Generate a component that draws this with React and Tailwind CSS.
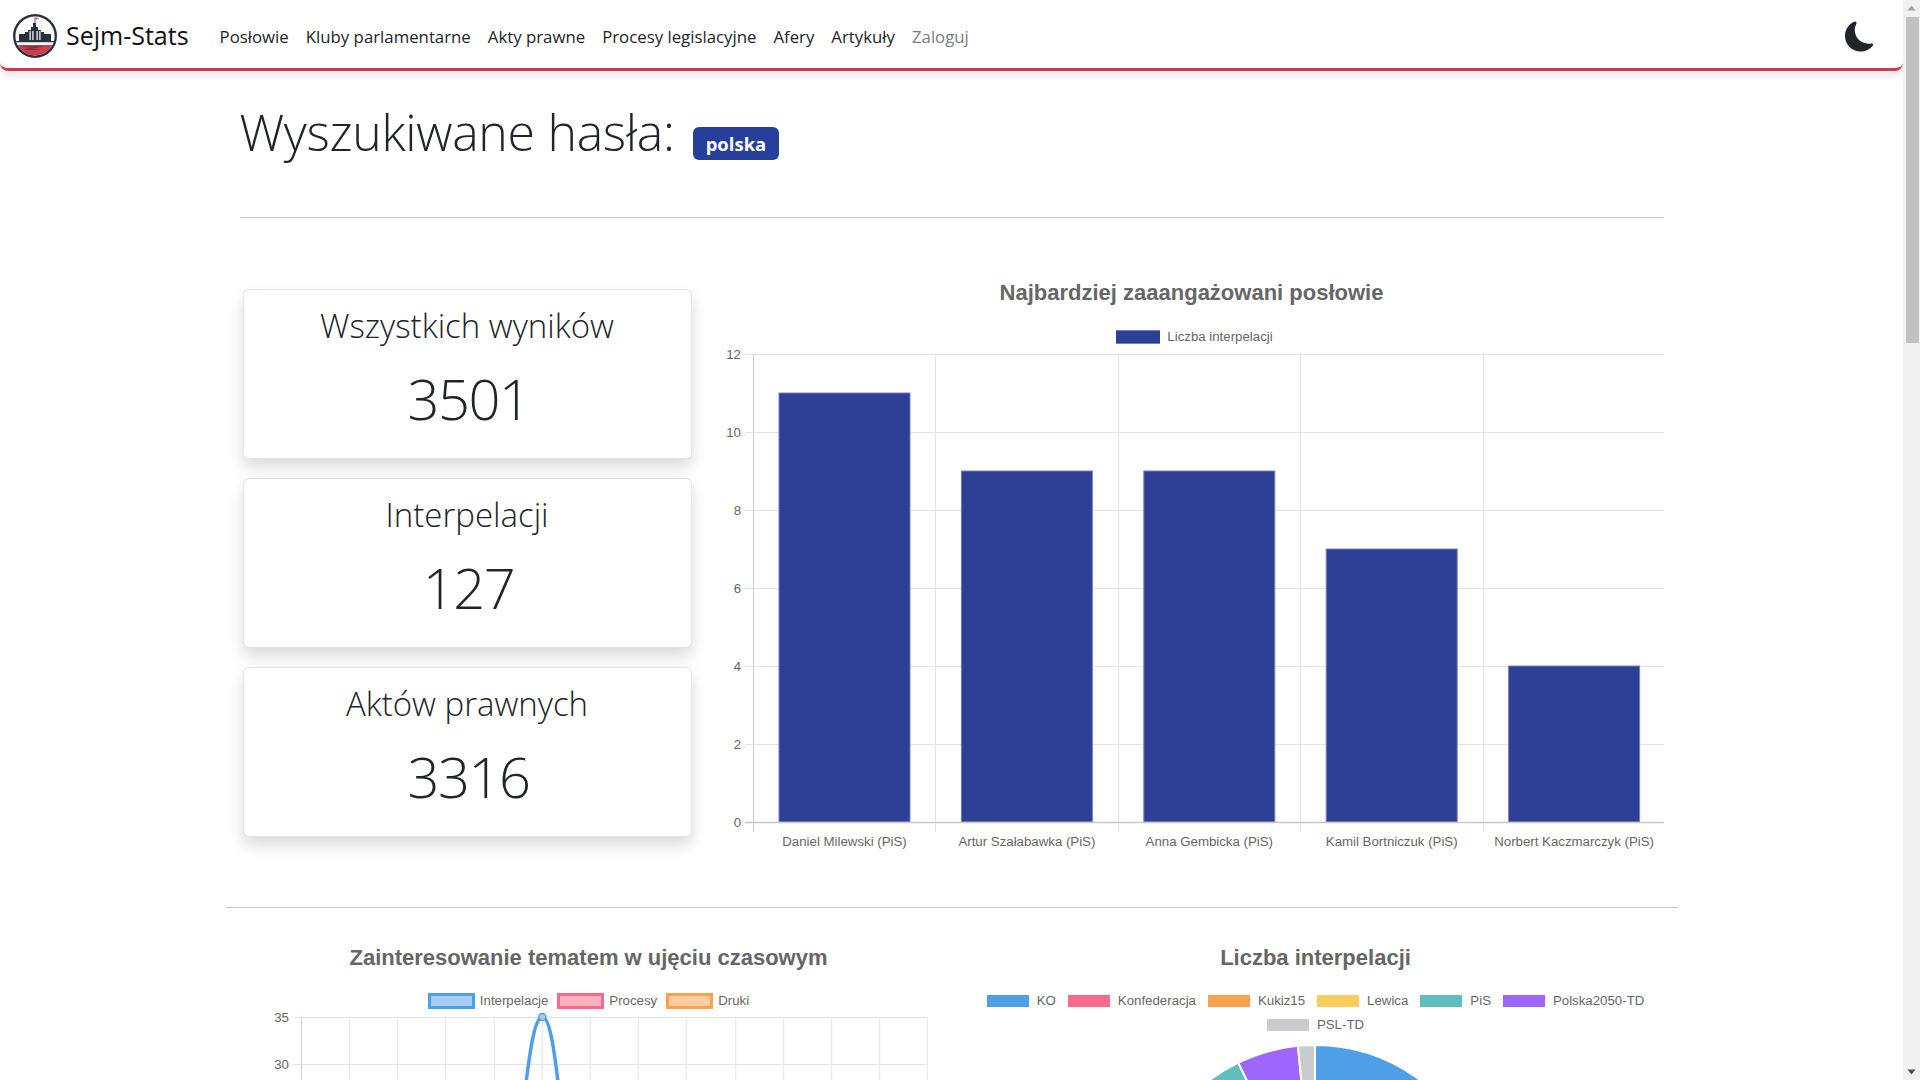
import React from "react";

const NAV_LINKS = ["Posłowie", "Kluby parlamentarne", "Akty prawne", "Procesy legislacyjne", "Afery", "Artykuły"];

const STATS = [
  { label: "Wszystkich wyników", value: "3501" },
  { label: "Interpelacji", value: "127" },
  { label: "Aktów prawnych", value: "3316" },
];

const BARS = [
  { name: "Daniel Milewski (PiS)", value: 11 },
  { name: "Artur Szałabawka (PiS)", value: 9 },
  { name: "Anna Gembicka (PiS)", value: 9 },
  { name: "Kamil Bortniczuk (PiS)", value: 7 },
  { name: "Norbert Kaczmarczyk (PiS)", value: 4 },
];

const LINE_LEGEND = [
  { label: "Interpelacje", border: "border-[#4e9fe9]", fill: "bg-[#a8cdf2]" },
  { label: "Procesy", border: "border-[#f96a8a]", fill: "bg-[#fcb1c2]" },
  { label: "Druki", border: "border-[#fba14b]", fill: "bg-[#fdcfa0]" },
];

const PIE_LEGEND = [
  { label: "KO", fill: "bg-[#4f9fe8]" },
  { label: "Konfederacja", fill: "bg-[#f96b8b]" },
  { label: "Kukiz15", fill: "bg-[#f9a24b]" },
  { label: "Lewica", fill: "bg-[#fbce5c]" },
  { label: "PiS", fill: "bg-[#5fbfbf]" },
  { label: "Polska2050-TD", fill: "bg-[#9c66ff]" },
];

const PIE = [
  { color: "#4f9fe8", from: 0, to: 140 },
  { color: "#f96b8b", from: 140, to: 175 },
  { color: "#f9a24b", from: 175, to: 190 },
  { color: "#fbce5c", from: 190, to: 262 },
  { color: "#5fbfbf", from: 262, to: 334 },
  { color: "#9c66ff", from: 334, to: 354.4 },
  { color: "#c9cbcf", from: 354.4, to: 360 },
];

const CHART_FONT = "'Liberation Sans', Arial, sans-serif";

const slicePath = (cx, cy, r, from, to) => {
  const point = (deg) => {
    const rad = (deg * Math.PI) / 180;
    return `${cx + r * Math.sin(rad)} ${cy - r * Math.cos(rad)}`;
  };
  return `M${cx} ${cy} L${point(from)} A${r} ${r} 0 ${to - from > 180 ? 1 : 0} 1 ${point(to)} Z`;
};

const Logo = () => (
  <svg viewBox="0 0 44 44" className="h-[44px] w-[44px] shrink-0">
    <defs>
      <clipPath id="logo-inner">
        <circle cx="22" cy="22" r="19.6" />
      </clipPath>
    </defs>
    <circle cx="22" cy="22" r="22" fill="#27323d" />
    <g clipPath="url(#logo-inner)">
      <rect width="44" height="44" fill="#ffffff" />
      <path d="M6 20h6v-2h3v-2h3v-3h2V9h1.6V4h.8v5H23v4h2v3h3v2h3v2h7v7H6z" fill="#27323d" />
      <path d="M22.4 3.2l3.2 1.3-3.2 1.2z" fill="#d13b47" />
      <path d="M16.5 17h1.2v9h-1.2zM19.3 17h1.2v9h-1.2zM23.5 17h1.2v9h-1.2zM26.3 17h1.2v9h-1.2z" fill="#ffffff" />
      <rect x="0" y="27" width="44" height="1.5" fill="#27323d" />
      <rect x="0" y="28.5" width="44" height="2.5" fill="#ffffff" />
      <rect x="0" y="31" width="44" height="13" fill="#d13b47" />
      <path d="M8 32.5c6-.6 14-.6 24 0-5 .8-9 1.4-13 2.4 3 0 6 .3 9 1-5 .3-11 .3-18-.5 4-.8 6-1.3 8-1.6-3-.4-6-.6-10-1.3z" fill="#27323d" opacity="0.5" />
    </g>
  </svg>
);

const Navbar = () => (
  <nav className="flex h-[71px] items-center rounded-b-lg border-b-[3px] border-[#cf3a47] bg-white pl-[13px] pr-[28px] pt-[3px] shadow-[0_4px_8px_rgba(0,0,0,0.1)]">
    <Logo />
    <span className="ml-[9px] mt-[1px] text-[25px] text-[#111]">Sejm-Stats</span>
    <ul className="ml-[31px] mt-[2px] flex items-center gap-[17px] text-[16.8px] text-[#212529]">
      {NAV_LINKS.map((link) => (
        <li key={link}>{link}</li>
      ))}
      <li className="text-[#7a7d80]">Zaloguj</li>
    </ul>
    <svg viewBox="0 0 16 16" className="ml-auto mt-[1px] h-[31px] w-[30px] text-[#212529]" fill="currentColor">
      <path d="M6 .278a.77.77 0 0 1 .08.858 7.2 7.2 0 0 0-.878 3.46c0 4.021 3.278 7.277 7.318 7.277q.792-.001 1.533-.16a.79.79 0 0 1 .81.316.73.73 0 0 1-.031.893A8.35 8.35 0 0 1 8.344 16C3.734 16 0 12.286 0 7.71 0 4.266 2.114 1.312 5.124.06A.75.75 0 0 1 6 .278" />
    </svg>
  </nav>
);

const StatCard = ({ label, value }) => (
  <div className="flex h-[170px] w-[449px] flex-col items-center rounded-md border border-black/10 bg-white pt-[12px] shadow-[0_8px_16px_rgba(0,0,0,0.15)]">
    <div className="text-[33px] font-light leading-[48px] text-[#212529]">{label}</div>
    <div className="ml-[3px] mt-[8px] text-[56px] font-light leading-[80px] tracking-[-1.5px] text-[#212529]">{value}</div>
  </div>
);

const BarChart = () => {
  const plotLeft = 33;
  const top = 8;
  const unit = 39;
  const step = 182.4;
  const bottom = top + unit * 12;
  return (
    <svg width="944" height="509" className="block" style={{ fontFamily: CHART_FONT }}>
      {[12, 10, 8, 6, 4, 2].map((tick) => {
        const y = top + (12 - tick) * unit + 0.5;
        return (
          <g key={tick}>
            <line x1={plotLeft - 8} x2="944" y1={y} y2={y} stroke="#e4e4e4" />
            <text x={plotLeft - 12} y={y + 4.5} textAnchor="end" fontSize="13.25" fill="#666">{tick}</text>
          </g>
        );
      })}
      <text x={plotLeft - 12} y={bottom + 5} textAnchor="end" fontSize="13.25" fill="#666">0</text>
      {[0, 1, 2, 3, 4, 5].map((i) => {
        const x = Math.round(plotLeft + i * step) + 0.5;
        return <line key={i} x1={x} x2={x} y1={top} y2={bottom + 10} stroke={i === 0 ? "#cfcfcf" : "#e4e4e4"} />;
      })}
      {BARS.map((bar, i) => {
        const x = plotLeft + 26 + i * step;
        const y = top + (12 - bar.value) * unit;
        return (
          <g key={bar.name}>
            <rect x={x} y={y} width="131" height={bar.value * unit} fill="#2e3f96" stroke="#7480bd" strokeWidth="1" />
            <text x={x + 65.5} y={bottom + 24} textAnchor="middle" fontSize="13.25" fill="#666">{bar.name}</text>
          </g>
        );
      })}
      <line x1={plotLeft - 8} x2="944" y1={bottom + 0.5} y2={bottom + 0.5} stroke="#c8c8c8" strokeWidth="1.5" />
    </svg>
  );
};

const LineChart = () => {
  const xs = [51.4, 99.4, 147.4, 195.4, 244.4, 292.3, 340.3, 388.3, 436.3, 485.8, 533.7, 581.7, 629.7, 677.7];
  return (
    <svg width="678" height="80" className="block" style={{ fontFamily: CHART_FONT }}>
      {xs.map((x, i) => (
        <line key={x} x1={x} x2={x} y1="8" y2="80" stroke={i === 0 ? "#cfcfcf" : "#e4e4e4"} />
      ))}
      {[
        { label: "35", y: 8.5 },
        { label: "30", y: 55.5 },
      ].map((tick) => (
        <g key={tick.label}>
          <line x1="43" x2="678" y1={tick.y} y2={tick.y} stroke="#e4e4e4" />
          <text x="39" y={tick.y + 4.5} textAnchor="end" fontSize="13.25" fill="#666">{tick.label}</text>
        </g>
      ))}
      <path d="M270 120 C277 70 282 8 292.3 8 C302.6 8 307 70 314 120" fill="none" stroke="#4e9fe9" strokeWidth="3.5" />
      <circle cx="292.3" cy="8" r="3.5" fill="#a8cdf2" stroke="#4e9fe9" strokeWidth="1.5" />
    </svg>
  );
};

const PieChart = () => (
  <svg width="728" height="360" className="block">
    {PIE.map((slice) => (
      <path key={slice.color} d={slicePath(363, 180, 175, slice.from, slice.to)} fill={slice.color} stroke="#ffffff" strokeWidth="2" />
    ))}
  </svg>
);

const ChartTitle = ({ children }) => (
  <h3 className="text-center text-[22px] font-bold leading-[28px] text-[#666]" style={{ fontFamily: CHART_FONT }}>
    {children}
  </h3>
);

const Scrollbar = () => (
  <aside className="flex w-[17px] shrink-0 flex-col items-center bg-[#f1f1f1]">
    <svg viewBox="0 0 17 17" className="h-[17px] w-[17px] shrink-0" fill="#a3a3a3">
      <path d="M4.5 10.5h8l-4-5z" />
    </svg>
    <div className="ml-[2px] h-[326px] w-[13px] bg-[#c1c1c1]" />
    <svg viewBox="0 0 17 17" className="mt-auto h-[17px] w-[17px] shrink-0" fill="#505050">
      <path d="M4.5 6.5h8l-4 5z" />
    </svg>
  </aside>
);

export default function App() {
  return (
    <div className="flex h-screen overflow-hidden bg-white" style={{ fontFamily: "'Open Sans', sans-serif" }}>
      <div className="min-w-0 flex-1">
        <Navbar />
        <main className="mx-auto w-[1424px]">
          <div className="mt-[28px] flex items-center">
            <h1 className="text-[50px] font-light leading-[67px] tracking-[-0.3px] text-[#212529]">Wyszukiwane hasła:</h1>
            <span className="ml-[18px] mt-[22px] rounded-md bg-[#253f9a] px-[13px] py-[3px] text-[18.5px] font-bold leading-[27px] text-white">
              polska
            </span>
          </div>
          <hr className="mt-[51px] border-t border-[#c6c6c6]" />

          <div className="mt-[61px] flex items-start">
            <div className="ml-[3px] mt-[10px] flex flex-col gap-[19px]">
              {STATS.map((stat) => (
                <StatCard key={stat.label} {...stat} />
              ))}
            </div>
            <div className="ml-[28px] w-[944px]">
              <ChartTitle>Najbardziej zaaangażowani posłowie</ChartTitle>
              <div className="mb-[1px] mt-[22px] flex items-center justify-center gap-[7px] pl-[6px] text-[13.25px] leading-[16px] text-[#666]" style={{ fontFamily: CHART_FONT }}>
                <span className="h-[14px] w-[44px] border-y border-[#7480bd] bg-[#2e3f96]" />
                Liczba interpelacji
              </div>
              <BarChart />
            </div>
          </div>

          <hr className="-mx-3.5 mt-[52px] border-t border-[#c6c6c6]" />

          <div className="-mx-3.5 mt-[36px] flex pl-[24px]">
            <div className="w-[678px] shrink-0">
              <ChartTitle>Zainteresowanie tematem w ujęciu czasowym</ChartTitle>
              <div className="mt-[21px] flex items-center justify-center gap-[9px] text-[13.25px] leading-[16px] text-[#666]" style={{ fontFamily: CHART_FONT }}>
                {LINE_LEGEND.map((item) => (
                  <span key={item.label} className="flex items-center gap-[5px]">
                    <span className={`h-[16px] w-[47px] border-[3px] ${item.border} ${item.fill}`} />
                    {item.label}
                  </span>
                ))}
              </div>
              <LineChart />
            </div>
            <div className="ml-[24px] w-[728px]">
              <ChartTitle>Liczba interpelacji</ChartTitle>
              <div className="mt-[23px] flex flex-wrap items-center justify-center gap-x-[12px] text-[13.25px] leading-[12px] text-[#666]" style={{ fontFamily: CHART_FONT }}>
                {PIE_LEGEND.map((item) => (
                  <span key={item.label} className="flex items-center gap-[8px]">
                    <span className={`h-[12px] w-[42px] ${item.fill}`} />
                    {item.label}
                  </span>
                ))}
              </div>
              <div className="mt-[12px] flex items-center justify-center gap-[8px] text-[13.25px] leading-[12px] text-[#666]" style={{ fontFamily: CHART_FONT }}>
                <span className="h-[12px] w-[42px] bg-[#c9cbcf]" />
                PSL-TD
              </div>
              <div className="mt-[9px]">
                <PieChart />
              </div>
            </div>
          </div>
        </main>
      </div>
      <Scrollbar />
    </div>
  );
}
